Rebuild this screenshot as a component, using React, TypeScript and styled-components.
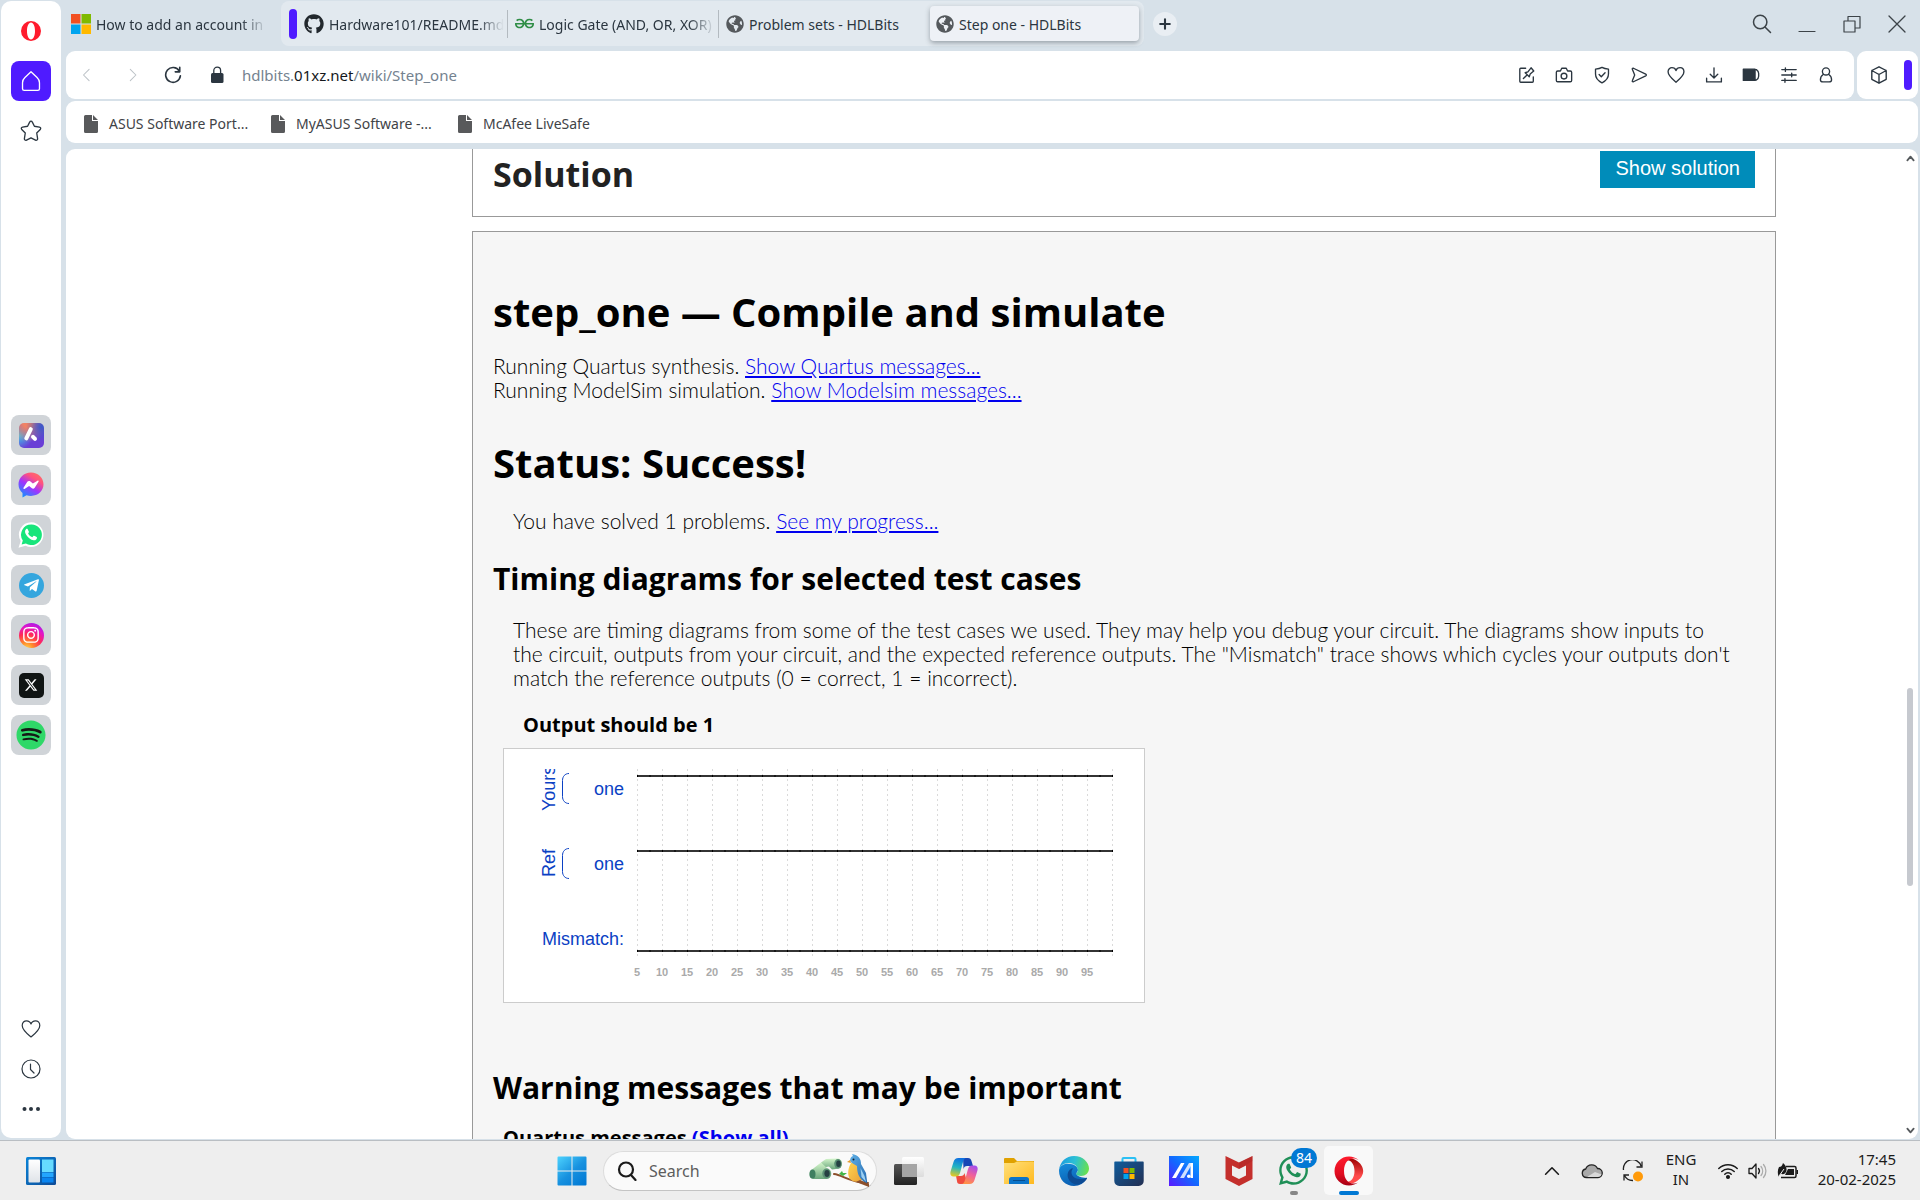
import React from "react";
import styled, { createGlobalStyle } from "styled-components";
import { FaGithub, FaWhatsapp, FaTelegramPlane, FaInstagram, FaSpotify, FaGlobeAmericas } from "react-icons/fa";
import { FaXTwitter } from "react-icons/fa6";
import { SiGeeksforgeeks } from "react-icons/si";

const ui = '"Noto Sans", "Open Sans", sans-serif';
const heading = '"Open Sans", "Noto Sans", sans-serif';
const body = 'Lato, "Open Sans", sans-serif';
const arial = '"Liberation Sans", Arial, sans-serif';
const frame = "#d7e1e9";
const violet = "#4f1bff";
const ink = "#2b3640";

const GlobalStyle = createGlobalStyle`
  * { box-sizing: border-box; }
  body { margin: 0; overflow: hidden; background: ${frame}; font-family: ${ui}; }
  button { border: 0; padding: 0; background: none; font: inherit; color: inherit; cursor: pointer; }
  h1, h2, h3, h4, p, figure { margin: 0; }
  svg { display: block; flex: none; }
`;

const Desktop = styled.div`
  display: grid;
  grid-template-rows: minmax(0, 1fr) 60px;
  height: 100vh;
`;
const Browser = styled.div`
  display: flex;
  gap: 5px;
  min-height: 0;
  padding-left: 1px;
`;
const Sidebar = styled.nav`
  display: flex;
  flex-direction: column;
  align-items: center;
  flex: none;
  width: 60px;
  margin: 1px 0 2px;
  padding: 10px 0 9px;
  background: #fff;
  border-radius: 10px;
  color: ${ink};
`;
const SideButton = styled.button<{ $active?: boolean }>`
  display: grid;
  place-items: center;
  width: 40px;
  height: 40px;
  border-radius: 8px;
  background: ${(p) => (p.$active ? violet : "transparent")};
`;
const SideGroup = styled.div<{ $gap: number }>`
  display: flex;
  flex-direction: column;
  gap: ${(p) => p.$gap}px;
`;
const TopGroup = styled(SideGroup)`
  margin-top: 10px;
`;
const AppStack = styled(SideGroup)`
  margin-top: 264px;
  margin-bottom: auto;
`;
const AppTile = styled.button`
  display: grid;
  place-items: center;
  width: 40px;
  height: 40px;
  border-radius: 8px;
  background: #d0d4d8;
`;
const Glyph = styled.span<{ $bg: string; $round?: boolean; $size?: number }>`
  display: grid;
  place-items: center;
  width: ${(p) => p.$size ?? 25}px;
  height: ${(p) => p.$size ?? 25}px;
  border-radius: ${(p) => (p.$round ? "50%" : "5px")};
  background: ${(p) => p.$bg};
  color: #fff;
`;
const Main = styled.div`
  display: flex;
  flex-direction: column;
  flex: 1;
  min-width: 0;
`;
const TabStrip = styled.div`
  display: flex;
  align-items: flex-start;
  height: 51px;
  padding: 1px 1px 0 0;
  color: ${ink};
  font-size: 14px;
`;
const Tab = styled.button<{ $divider?: boolean }>`
  display: flex;
  align-items: center;
  gap: 5px;
  width: 211px;
  height: 28px;
  padding: 0 3px 0 7px;
  text-align: left;
  border-right: 1px solid ${(p) => (p.$divider ? "#b3bac0" : "transparent")};
`;
const LooseTab = styled(Tab)`
  width: 215px;
  height: 45px;
  padding: 0 13px 0 5px;
`;
const ActiveTab = styled(Tab)`
  width: 209px;
  height: 35px;
  padding-left: 6px;
  background: #eef1f6;
  border-radius: 4px;
  box-shadow: 0 2px 5px rgba(60, 70, 80, 0.45);
`;
const TabTitle = styled.span<{ $fade?: boolean }>`
  flex: 1;
  padding-top: 2px;
  overflow: hidden;
  white-space: nowrap;
  line-height: 24px;
  mask-image: ${(p) => (p.$fade ? "linear-gradient(90deg, #000 85%, transparent)" : "none")};
`;
const TabGroup = styled.div`
  display: flex;
  align-items: center;
  height: 45px;
  padding: 0 5px 0 8px;
  border-radius: 8px;
  background: #e2e9ef;
`;
const Marker = styled.span`
  width: 8px;
  height: 30px;
  border-radius: 4px;
  background: ${violet};
`;
const NewTab = styled.button`
  display: grid;
  place-items: center;
  width: 24px;
  height: 24px;
  margin: 11px 0 0 9px;
  border-radius: 50%;
  background: #e9eef3;
`;
const WindowButtons = styled.div`
  display: flex;
  margin-left: auto;
`;
const WindowButton = styled.button`
  display: grid;
  place-items: center;
  width: 45px;
  height: 46px;
  color: #3c4348;
`;
const Bars = styled.div`
  display: flex;
  gap: 3px;
  margin-right: 2px;
`;
const Panel = styled.div`
  display: flex;
  align-items: center;
  background: #fff;
  border-radius: 9px;
`;
const AddressBar = styled(Panel)`
  flex: 1;
  height: 48px;
  padding: 0 9px 0 0;
`;
const NavButtons = styled.div`
  display: grid;
  grid-template-columns: 42px 46px 38px 50px;
`;
const NavButton = styled.button<{ $dim?: boolean }>`
  display: grid;
  place-items: center;
  height: 40px;
  color: ${(p) => (p.$dim ? "#bcc2c7" : ink)};
`;
const Address = styled.div`
  flex: 1;
  color: #74828f;
  font-size: 15px;
  line-height: 24px;
`;
const Domain = styled.span`
  color: #14181c;
`;
const Tools = styled.div`
  display: grid;
  grid-template-columns: repeat(9, 1fr);
  width: 337px;
`;
const ToolButton = styled.button`
  display: grid;
  place-items: center;
  height: 40px;
  color: ${ink};
`;
const SidePanel = styled(Panel)`
  width: 61px;
  gap: 15px;
  padding-left: 12px;
`;
const Bookmarks = styled(Panel)`
  height: 42px;
  margin: 2px 2px 0 0;
  padding: 3px 0 0 18px;
  font-size: 14px;
`;
const Bookmark = styled.a`
  display: flex;
  align-items: center;
  gap: 11px;
  min-width: 165px;
  margin-right: 22px;
  color: #3f4347;
  text-decoration: none;
  line-height: 24px;
`;
const Viewport = styled.main`
  display: grid;
  grid-template-columns: 406px minmax(0, 1fr) 126px 16px;
  flex: 1;
  min-height: 0;
  margin: 6px 2px 1px 0;
  overflow: hidden;
  background: #fff;
  border-radius: 9px;
`;
const Article = styled.div`
  grid-column: 2;
  display: flex;
  flex-direction: column;
  gap: 14px;
  min-height: 0;
`;
const SolutionBox = styled.section`
  display: flex;
  justify-content: space-between;
  align-items: flex-start;
  flex: none;
  padding: 2px 20px 19px;
  border: 1px solid #999;
  border-top: 0;
`;
const SolutionTitle = styled.h2`
  color: #222;
  font: 700 34px/46px ${heading};
`;
const ShowSolution = styled.button`
  padding: 0 15px 4px;
  height: 37px;
  background: #008cba;
  color: #fff;
  font: 400 20px/32px ${arial};
`;
const Results = styled.section`
  flex: 1 0 auto;
  padding: 56px 20px 0;
  border: 1px solid #999;
  border-bottom: 0;
  background: #f6f6f6;
  color: #000;
  font: 300 21px/24px ${body};
`;
const Title = styled.h1<{ $top?: number }>`
  margin-top: ${(p) => p.$top ?? 0}px;
  font: 700 40px/48px ${heading};
`;
const Subtitle = styled.h2<{ $top: number }>`
  margin-top: ${(p) => p.$top}px;
  font: 700 30px/36px ${heading};
`;
const Caption = styled.h4<{ $top: number; $indent: number }>`
  margin: ${(p) => p.$top}px 0 0 ${(p) => p.$indent}px;
  font: 700 20px/24px ${heading};
`;
const Text = styled.p<{ $top: number; $indent?: boolean }>`
  margin: ${(p) => p.$top}px 0 0 ${(p) => (p.$indent ? 20 : 0)}px;
`;
const Link = styled.a`
  color: #00e;
`;
const ShowAll = styled(Link)`
  text-decoration: none;
`;
const Chart = styled.figure`
  width: 642px;
  margin: 11px 0 0 10px;
  border: 1px solid #ccc;
  background: #fff;
`;
const ScrollTrack = styled.div`
  grid-column: 4;
  display: flex;
  flex-direction: column;
  align-items: center;
  padding: 5px 0 4px;
  color: #55595c;
`;
const ScrollThumb = styled.div`
  width: 6px;
  height: 198px;
  margin: 525px 0 auto;
  border-radius: 3px;
  background: #c6c9cf;
`;

const Taskbar = styled.footer`
  display: grid;
  grid-template-columns: 1fr auto 1fr;
  align-items: center;
  border-top: 1px solid #b9bec3;
  background: #eee;
  color: #1b1b1b;
`;
const Widgets = styled.button`
  margin-left: 26px;
  justify-self: start;
`;
const Pinned = styled.div`
  display: flex;
  align-items: center;
`;
const Search = styled.label`
  display: flex;
  align-items: center;
  width: 274px;
  height: 40px;
  margin: 0 4px;
  padding: 0 5px 0 13px;
  border: 1px solid #dcdcdc;
  border-bottom-color: #c4c4c4;
  border-radius: 20px;
  background: #fafafa;
`;
const SearchInput = styled.input`
  flex: 1;
  min-width: 0;
  padding: 0 0 0 12px;
  border: 0;
  outline: 0;
  background: none;
  font: 400 16px/24px ${ui};
  &::placeholder { color: #5d5d5d; opacity: 1; }
`;
const TaskButton = styled.button<{ $active?: boolean }>`
  position: relative;
  display: grid;
  place-items: center;
  width: 49px;
  height: 49px;
  margin: 0 3px;
  border-radius: 5px;
  background: ${(p) => (p.$active ? "#f9f9f9" : "none")};
`;
const Running = styled.span<{ $active?: boolean }>`
  position: absolute;
  bottom: 0;
  left: 50%;
  width: ${(p) => (p.$active ? 20 : 8)}px;
  height: 4px;
  border-radius: 2px;
  background: ${(p) => (p.$active ? "#0078d4" : "#868686")};
  transform: translateX(-50%);
`;
const Badge = styled.span`
  position: absolute;
  top: 2px;
  left: 22px;
  width: 26px;
  border-radius: 10px;
  background: #0078d4;
  color: #fff;
  font-size: 14px;
  line-height: 20px;
`;
const Tray = styled.div`
  display: flex;
  align-items: center;
  justify-content: flex-end;
  padding-right: 24px;
  font-size: 15px;
  line-height: 20px;
`;
const TrayButton = styled.button<{ $w: number }>`
  display: grid;
  place-items: center;
  width: ${(p) => p.$w}px;
  height: 44px;
`;
const StatusIcons = styled.div`
  display: flex;
  margin-left: 5px;
`;
const Clock = styled.button`
  min-width: 93px;
  padding-bottom: 3px;
  text-align: right;
`;
const Language = styled.span`
  padding-bottom: 3px;
`;

type LineProps = { size?: number; width?: number; color?: string; children: React.ReactNode };
const Line = ({ size = 20, width = 1.5, color = "currentColor", children }: LineProps) => (
  <svg width={size} height={size} viewBox="0 0 20 20" fill="none" stroke={color} strokeWidth={width} strokeLinecap="round" strokeLinejoin="round" aria-hidden="true">
    {children}
  </svg>
);

const HeartPath = () => <path d="M10 18C7 15.500 1.200 11 1.200 6.500 1.200 3.500 3.300 1.800 5.500 1.800 7.500 1.800 9.300 3 10 5c.7-2 2.500-3.200 4.500-3.200 2.200 0 4.300 1.700 4.300 4.700C18.800 11 13 15.500 10 18Z" />;

const WindowsLogo = () => (
  <svg width="20" height="20" viewBox="0 0 20 20" aria-hidden="true">
    <path fill="#f25022" d="M0 0h9.500v9.500H0z" /><path fill="#7fba00" d="M10.500 0H20v9.500h-9.500z" />
    <path fill="#00a4ef" d="M0 10.500h9.500V20H0z" /><path fill="#ffb900" d="M10.500 10.500H20V20h-9.500z" />
  </svg>
);

const OperaFlat = () => (
  <svg width="20" height="20" viewBox="0 0 20 20" aria-hidden="true">
    <path fill="#ff1b2d" fillRule="evenodd" d="M10 0a10 10 0 1 0 0 20 10 10 0 0 0 0-20Zm0 1.600c2.400 0 4 3.600 4 8.400s-1.600 8.400-4 8.400S6 14.800 6 10s1.600-8.400 4-8.400Z" />
  </svg>
);

const OperaLogo = () => (
  <svg width="30" height="30" viewBox="0 0 30 30" aria-hidden="true">
    <defs>
      <linearGradient id="opA" x1="0" y1="0" x2="0" y2="1"><stop offset="0" stopColor="#ff1b2d" /><stop offset=".6" stopColor="#e00c20" /><stop offset="1" stopColor="#a70014" /></linearGradient>
      <linearGradient id="opB" x1="0" y1="0" x2="0" y2="1"><stop offset="0" stopColor="#9c0000" /><stop offset=".7" stopColor="#ff4b4b" /></linearGradient>
    </defs>
    <path fill="url(#opB)" d="M10 5c2.500-3 6.500-3.500 10-1.800C24 5.100 29.200 9 29.200 15S24 25 20 26.800c-3.500 1.700-7.500 1.200-10-1.800 6 3 10.500-2.500 10.500-10S16 2 10 5Z" />
    <path fill="url(#opA)" d="M15 .5a14.500 14.500 0 1 0 0 29c3.600 0 7-1.300 9.600-3.500-5.700 3.800-14.600 1-14.600-11S18.900.200 24.600 4A14.500 14.500 0 0 0 15 .5Z" />
  </svg>
);

const Messenger = () => (
  <svg width="26" height="26" viewBox="0 0 26 26" aria-hidden="true">
    <defs><linearGradient id="msg" x1=".15" y1="1" x2=".8" y2="0"><stop offset="0" stopColor="#0a99ff" /><stop offset=".45" stopColor="#a034ff" /><stop offset=".75" stopColor="#ff5280" /><stop offset="1" stopColor="#ff7061" /></linearGradient></defs>
    <path fill="url(#msg)" d="M13 .5C5.800.5.500 5.700.5 12.300c0 3.700 1.600 6.700 4 8.800V25.500l4-2.200c1.400.4 2.900.6 4.500.6 7.200 0 12.500-5 12.500-11.600S20.200.5 13 .5Z" />
    <path fill="#fff" d="m5.500 15.800 3.800-6c.7-1 1.900-1.200 2.800-.5l2.800 2.200 4.600-2.800c.8-.4 1.500.4 1 1.100l-3.800 6c-.7 1-1.900 1.200-2.800.5l-2.800-2.200-4.600 2.800c-.8.400-1.500-.4-1-1.100Z" />
  </svg>
);

const WhatsAppBubble = () => (
  <svg width="26" height="26" viewBox="0 0 26 26" aria-hidden="true">
    <path fill="#fff" d="M13.300.300A12.300 12.300 0 0 0 2.700 18.900L.5 25.700l7-1.900A12.400 12.400 0 1 0 13.300.3Z" />
    <path fill="#18e57b" d="M13.300 2.500a10.200 10.200 0 0 0-8.500 15.900l-1.200 4.200 4.300-1.200A10.300 10.300 0 1 0 13.300 2.500Z" />
    <path fill="#fff" d="M9.700 7.300c-.3-.6-1.200-.6-1.700 0C6.400 9 7 11 8.300 13c2 3 4.400 4.700 7.300 5.300 1.800.3 3.400-.9 3.400-2.800 0-.8-2.900-2.200-3.400-1.800l-1.300 1.500c-2-.8-3.300-2.200-4.200-3.800L11 10Z" />
  </svg>
);

const AriaLogo = () => (
  <Glyph $bg="radial-gradient(circle at 90% 15%, #3c59c9, transparent 50%), radial-gradient(circle at 35% 0, #f08265 15%, transparent 65%), radial-gradient(circle at 0 50%, #3fc7ea, transparent 50%), #6a3ed6">
    <svg width="18" height="18" viewBox="0 0 18 18" fill="none" stroke="#fff" strokeLinecap="round" aria-hidden="true">
      <path strokeWidth="4" d="M8.800 3.200 4.300 12.300" /><path strokeWidth="4" d="m11 10.800 2 2" />
    </svg>
  </Glyph>
);

const Instagram = () => (
  <Glyph $round $bg="radial-gradient(circle at 30% 105%, #fd5 0, #ff8a2b 22%, #ff2a55 48%, #e415c8 70%, #7a1fff 100%)"><FaInstagram size={18} /></Glyph>
);

const StartLogo = () => (
  <svg width="30" height="30" viewBox="0 0 30 30" aria-hidden="true">
    <defs><linearGradient id="win" gradientUnits="userSpaceOnUse" x1="0" y1="0" x2="26" y2="30"><stop offset="0" stopColor="#4fd5ff" /><stop offset=".55" stopColor="#1791df" /><stop offset="1" stopColor="#0078d4" /></linearGradient></defs>
    <path fill="url(#win)" d="M1.500.5h13v14H.5v-13a1 1 0 0 1 1-1ZM15.500.5h13a1 1 0 0 1 1 1v13h-14ZM.5 15.500h14v14h-13a1 1 0 0 1-1-1ZM15.500 15.500h14v13a1 1 0 0 1-1 1h-13Z" />
  </svg>
);

const WidgetsLogo = () => (
  <svg width="30" height="28" viewBox="0 0 30 28" aria-hidden="true">
    <defs><linearGradient id="wd" x1="0" y1="0" x2="1" y2="1"><stop offset="0" stopColor="#0a84d8" /><stop offset="1" stopColor="#0f4b96" /></linearGradient><linearGradient id="wp" x1="0" y1="0" x2="0" y2="1"><stop offset="0" stopColor="#fff" /><stop offset="1" stopColor="#dfe3e8" /></linearGradient></defs>
    <rect width="30" height="28" rx="1.500" fill="url(#wd)" />
    <rect x="2.500" y="2.500" width="11.500" height="23" rx="1" fill="url(#wp)" />
    <path fill="#66dbff" d="M16 2.500h11.500V15H16z" /><path fill="#23a6ff" d="M16 15.500h11.500V20H16z" /><path fill="#0a85f0" d="M16 20.500h11.500v5H16z" />
  </svg>
);

const SearchArt = () => (
  <svg width="62" height="34" viewBox="0 0 62 34" aria-hidden="true">
    <defs>
      <linearGradient id="bino" x1="0" y1="0" x2="0" y2="1"><stop offset="0" stopColor="#d3f5ca" /><stop offset="1" stopColor="#6aa67c" /></linearGradient>
      <linearGradient id="birdBody" x1="0" y1="0" x2="1" y2="1"><stop offset="0" stopColor="#ffd54d" /><stop offset="1" stopColor="#e9a13a" /></linearGradient>
      <linearGradient id="wing" x1="0" y1="0" x2="1" y2="1"><stop offset="0" stopColor="#5fb0e6" /><stop offset="1" stopColor="#2468ae" /></linearGradient>
    </defs>
    <path fill="url(#bino)" d="M12 8.500 17 5l11-.5c3 0 5 2 5 5s-1.500 5-4 5.200l-6 .8-3-3-6 1Z" />
    <path fill="url(#bino)" d="M3 15.500 12 8.500l6 5.500c3 1 4.500 3 4.300 6-.2 3-2 5-5 5H4.500c-2.500 0-4-2-4-4.700 0-2 .8-3.800 2.500-4.800Z" />
    <ellipse cx="3.500" cy="20" rx="3" ry="4.500" fill="#3f7f60" />
    <ellipse cx="17.500" cy="19.500" rx="4.200" ry="5" fill="#5a8f74" /><ellipse cx="18" cy="19.500" rx="2.600" ry="3.400" fill="#253f42" />
    <ellipse cx="29" cy="9.800" rx="3.800" ry="4.800" fill="#5a8f74" /><ellipse cx="29.500" cy="9.800" rx="2.300" ry="3.200" fill="#253f42" />
    <path d="M25 20c9 1 14 8 34 9" fill="none" stroke="#8b4f2c" strokeWidth="2" strokeLinecap="round" />
    <path fill="#44b649" d="m30 20 3-3 1 2 4 0-4 3Z" />
    <path fill="url(#birdBody)" d="M42 9c-3 5-4 12-1 16 4 4 9 3 12 1L50 8Z" />
    <path fill="url(#wing)" d="M41 7c0-3 1.500-4.500 3-5l-1-2c3 .5 5.500 1.500 7 3.500 1.500 2 2 4 2 6.500l5 9 1.500 12-5.500-5c-4-4-5-9-5-14-2-1.500-5-2-7-5Z" />
    <path fill="#9cd0f2" d="m51.500 14 4 8 1.500 6-4.500-5Z" /><path fill="#e39b2d" d="m41 6-3 2 4 1Z" /><circle cx="44.500" cy="5.500" r="1" fill="#16212b" />
    <path fill="#8b4f2c" d="m47 28 13 5 0-3-9-4Z" />
  </svg>
);

const TaskView = () => (
  <svg width="30" height="30" viewBox="0 0 30 30" aria-hidden="true">
    <defs><linearGradient id="tv" x1="0" y1="0" x2="0" y2="1"><stop offset="0" stopColor="#555" /><stop offset="1" stopColor="#222" /></linearGradient><linearGradient id="tw" x1="0" y1="0" x2="0" y2="1"><stop offset="0" stopColor="#fff" /><stop offset="1" stopColor="#dcdcdc" /></linearGradient></defs>
    <rect y="8" width="23" height="21" rx="1.500" fill="url(#tv)" /><rect x="8" y="1" width="22" height="20" rx="1.500" fill="url(#tw)" /><path fill="#a5a5a5" d="M8 8h15v13H9a1 1 0 0 1-1-1Z" />
  </svg>
);

const Copilot = () => (
  <svg width="28" height="28" viewBox="0 0 28 28" aria-hidden="true">
    <defs>
      <linearGradient id="c1" x1=".5" y1="0" x2=".3" y2="1"><stop offset="0" stopColor="#0f6fe0" /><stop offset=".5" stopColor="#21b5c2" /><stop offset="1" stopColor="#e8c81e" /></linearGradient>
      <linearGradient id="c2" x1=".8" y1="0" x2=".4" y2="1"><stop offset="0" stopColor="#a04df0" /><stop offset=".5" stopColor="#f0609c" /><stop offset="1" stopColor="#ff9147" /></linearGradient>
    </defs>
    <path fill="#1747b5" d="M13 1h5c2 0 3 1 3.500 3l1.500 5h-6c-2 0-3 1-3.500 3Z" />
    <path fill="#ef4b3f" d="M15 27h-5c-2 0-3-1-3-3l-1-5h5c2 0 3-1 3.500-3l2 7Z" />
    <path fill="url(#c1)" d="M8.500 1h8c-2 0-3 2-3.500 4l-3 11c-.7 2.500-2 3.500-4 3.500H3.500C.5 19.500-.2 17 .7 14L3.500 5c.8-2.500 2.200-4 5-4Z" />
    <path fill="url(#c2)" d="M19.500 27h-8c2 0 3-2 3.500-4l3-11c.7-2.500 2-3.500 4-3.500h2.500c3 0 3.700 2.500 2.800 5.500L24.500 23c-.8 2.500-2.200 4-5 4Z" />
  </svg>
);

const Folder = () => (
  <svg width="30" height="30" viewBox="0 0 30 30" aria-hidden="true">
    <defs><linearGradient id="fo" x1="0" y1="0" x2="1" y2="1"><stop offset="0" stopColor="#ffe07a" /><stop offset="1" stopColor="#ffb91f" /></linearGradient></defs>
    <path fill="#e0a100" d="M1 2h9l3 3h17v4H0V3a1 1 0 0 1 1-1Z" /><path fill="url(#fo)" d="M0 7h10l3-1.500h16a1 1 0 0 1 1 1V28H0Z" />
    <path fill="#0b74c9" d="M7.500 21h15a2.500 2.500 0 0 1 2.500 2.500V28H5v-4.500A2.500 2.500 0 0 1 7.500 21Z" /><path stroke="#064c8c" d="M9 24.500h12" />
  </svg>
);

const Edge = () => (
  <svg width="30" height="30" viewBox="0 0 30 30" aria-hidden="true">
    <defs>
      <linearGradient id="e1" x1="0" y1=".3" x2="1" y2=".5"><stop offset="0" stopColor="#1a9be0" /><stop offset=".5" stopColor="#2cc0d4" /><stop offset="1" stopColor="#68e04f" /></linearGradient>
      <linearGradient id="e2" x1=".3" y1="0" x2=".6" y2="1"><stop offset="0" stopColor="#1489d8" /><stop offset="1" stopColor="#0a5cb0" /></linearGradient>
    </defs>
    <path fill="url(#e2)" d="M.1 13.500C1 9.500 5 7.700 9 7.700c6 0 10 3 10 6.300 0 1.800-1.500 2-1.500 3.500 0 2 3.500 4 8 4.200L28 22c-2.600 5-7.500 8-13 8C6 30-.7 22.500.1 13.500Z" />
    <path fill="#0d4b94" d="M12.500 12.500c-6 3-5 12.500 2.500 15.500 5.500 1.800 10.500-1.500 12.800-5.300.4-.7-.2-1.100-.8-.8-5 2.600-14.500 1-14.500-5.400 0-1.500.5-3 1.800-4Z" />
    <path fill="url(#e1)" d="M.1 13.500C1 5.800 7.200 0 15 0c9 0 15 6.500 15 12.500 0 4.500-3.500 7.500-8 7.500-3 0-4.800-1-4.800-2 0-.8 1.600-1.500 1.600-4 0-3.700-4-7-9.300-7C5 7 1.300 9.800.1 13.500Z" />
  </svg>
);

const Store = () => (
  <svg width="30" height="30" viewBox="0 0 30 30" aria-hidden="true">
    <defs><linearGradient id="st" x1="0" y1="0" x2="1" y2="1"><stop offset="0" stopColor="#0f5c9c" /><stop offset="1" stopColor="#242f52" /></linearGradient></defs>
    <path fill="none" stroke="#2bc0f4" strokeWidth="2" d="M8.500 7V3a1 1 0 0 1 1-1h11a1 1 0 0 1 1 1v4" />
    <path fill="url(#st)" d="M1 5.500h28a.7.7 0 0 1 .7.7V25a5 5 0 0 1-5 5H5.300a5 5 0 0 1-5-5V6.200A.7.7 0 0 1 1 5.500Z" />
    <path fill="#f25022" d="M9.500 12h5v5h-5z" /><path fill="#7fba00" d="M15.500 12h5v5h-5z" /><path fill="#00a4ef" d="M9.500 18h5v5h-5z" /><path fill="#ffb900" d="M15.500 18h5v5h-5z" />
  </svg>
);

const MyAsus = () => (
  <svg width="30" height="30" viewBox="0 0 30 30" aria-hidden="true">
    <defs><linearGradient id="ma" x1="0" y1="1" x2="1" y2="0"><stop offset="0" stopColor="#5a17ff" /><stop offset=".5" stopColor="#1368ff" /><stop offset="1" stopColor="#05a9ff" /></linearGradient></defs>
    <path fill="url(#ma)" d="M0 0h30v30H0z" />
    <path fill="#fff" d="M12 7h3.500L7 22H3Z" /><path fill="#cfe0ff" d="M20 7h3.500L15 22h-4Z" /><path fill="#fff" d="M21.500 7H24v15h-2.500Z" /><circle cx="19.800" cy="20.300" r="1.800" fill="#fff" />
  </svg>
);

const McAfee = () => (
  <svg width="30" height="30" viewBox="0 0 30 30" aria-hidden="true">
    <path fill="#c42f2c" fillRule="evenodd" d="M1.500 0 15 6.500 28.500 0v23L15 30 1.500 23ZM8 9.500V19.500l7 3.500 7-3.500V9.500L15 13Z" />
    <path fill="#a52625" d="M15 6.500 28.500 0v5L15 13Z" opacity=".35" />
  </svg>
);

const Globe = () => <FaGlobeAmericas size={18} color="#55595d" />;

const DocIcon = () => (
  <svg width="14" height="18" viewBox="0 0 14 18" aria-hidden="true"><path fill="#58595b" d="M1.500 0H8v6h6v10.500a1.500 1.500 0 0 1-1.500 1.500h-11A1.500 1.500 0 0 1 0 16.500v-15A1.500 1.500 0 0 1 1.500 0ZM9 0l5 5H9Z" /></svg>
);

const ticks = Array.from({ length: 20 }, (_, i) => i);
const traces = [27, 102, 202];

const TimingDiagram = () => (
  <svg width="640" height="253" viewBox="0 0 640 253" fontFamily={arial} role="img" aria-label="Timing diagram">
    <g stroke="#b4b4b4" strokeDasharray="1 4">
      {ticks.map((i) => <path key={i} d={`M${133.5 + i * 25} 20.500V208`} />)}
    </g>
    {traces.map((y) => (
      <g key={y} fill="none" stroke="#333" strokeWidth="2">
        <path d={`M133 ${y}H609`} />
        <path stroke="#000" strokeDasharray="1 11.500" d={`M133 ${y}H609`} />
      </g>
    ))}
    <g fill="#0b41c4" fontSize="18">
      <clipPath id="labelClip"><path d="M30 20h100v190H30z" /></clipPath>
      <g clipPath="url(#labelClip)">
        <text transform="translate(51 62) rotate(-90)">Yours</text>
      </g>
      <text transform="translate(51 128) rotate(-90)">Ref</text>
      <text x="120" y="46" textAnchor="end">one</text>
      <text x="120" y="121" textAnchor="end">one</text>
      <text x="120" y="196" textAnchor="end">Mismatch:</text>
    </g>
    <g fill="none" stroke="#0b41c4">
      <path d="M65 24.500c-4 0-6.500 3-6.500 7v16c0 4 2.500 7 6.500 7" /><path d="M65 99.500c-4 0-6.500 3-6.500 7v16c0 4 2.500 7 6.500 7" />
    </g>
    <g fill="#aaa" fontSize="11" fontWeight="700" textAnchor="middle">
      {ticks.slice(0, 19).map((i) => <text key={i} x={133 + i * 25} y="227">{(i + 1) * 5}</text>)}
    </g>
  </svg>
);

const tools: [string, React.ReactNode][] = [
  ["Edit page", <><path d="M8.500 2.500H3a1 1 0 0 0-1 1V17a1 1 0 0 0 1 1h13a1 1 0 0 0 1-1v-5" /><path d="m6 14 4-4M8 7.500l4.500 4.500 1-3 4-3.500L14.500 2 11 6.500Z" /></>],
  ["Snapshot", <><path d="M3 5.500h3l1.500-3h5l1.500 3h3a1.500 1.500 0 0 1 1.500 1.500v9a1.500 1.500 0 0 1-1.500 1.500H3A1.500 1.500 0 0 1 1.500 16V7A1.500 1.500 0 0 1 3 5.500Z" /><circle cx="10" cy="11.200" r="3.200" /></>],
  ["Blocker", <><path d="M10 1.500c2.500 1.500 5 1.800 7.200 2v5.500c0 4.500-3 7.700-7.200 9.700-4.200-2-7.200-5.200-7.200-9.700V3.500c2.200-.2 4.700-.5 7.200-2Z" /><path d="m6.800 9.500 2.400 2.500 4.200-4.500" /></>],
  ["My Flow", <path d="M3.800 2.500 17.500 9c.9.500.9 1.500 0 2L3.800 17.500c-1 .4-1.600-.3-1.200-1.200L5.200 10 2.600 3.700c-.4-.9.200-1.600 1.200-1.200Z" />],
  ["Favourites", <HeartPath />],
  ["Downloads", <><path d="M10 2v11M5.800 9.200 10 13.300l4.200-4.100M1.800 13.500v4.200h16.400v-4.200" /></>],
  ["Battery saver", <><path fill="currentColor" d="M1.500 3.500h13v12.500h-13Z" /><path d="M14.500 4h1.500c1.500 1 2.500 2.500 2.500 4v3.500c0 1.500-1 3-2.500 4h-1.500" /></>],
  ["Easy setup", <path d="M2 4h16M2 10h16M2 16h16M6 2v4M13 8v4M5.500 14v4" />],
  ["Profile", <><circle cx="10" cy="6" r="4" /><path d="M7.200 9.200C4.800 10.800 3.800 13 3.800 15.200c0 1.800 1.200 2.500 3 2.500h6.400c1.800 0 3-.7 3-2.500 0-2.200-1-4.400-3.400-6" /></>],
];

const sideApps: [string, React.ReactNode][] = [
  ["Aria", <AriaLogo />],
  ["Messenger", <Messenger />],
  ["WhatsApp", <WhatsAppBubble />],
  ["Telegram", <Glyph $round $bg="#35a6de"><FaTelegramPlane size={17} /></Glyph>],
  ["Instagram", <Instagram />],
  ["X", <Glyph $bg="#101413"><FaXTwitter size={14} /></Glyph>],
  ["Spotify", <Glyph $round $size={30} $bg="radial-gradient(#151a17 60%, transparent 62%)"><FaSpotify size={30} color="#2fd868" /></Glyph>],
];

export default function App() {
  return (
    <Desktop>
      <GlobalStyle />
      <Browser>
        <Sidebar aria-label="Browser sidebar">
          <SideButton aria-label="Opera menu"><OperaFlat /></SideButton>
          <TopGroup $gap={10}>
            <SideButton $active aria-label="Home"><Line size={22} width={1.2} color="#fff"><path d="m10 1.500 5.500 5.300c1.500 1.400 2.200 2.800 2.200 4.700v5.500c0 1-.7 1.500-1.500 1.500H3.800c-.8 0-1.500-.5-1.500-1.500v-5.500c0-1.900.7-3.300 2.200-4.700Z" /></Line></SideButton>
            <SideButton aria-label="Bookmarks"><Line size={22} width={1.2}><path d="M8.900 1.700c.4-.9 1.800-.9 2.200 0l2 4 4.600.7c1.100.2 1.500 1.400.7 2.200l-3.200 3.200.8 5.200c.1 1-.9 1.800-1.900 1.300L10 16.200l-4.100 2.100c-1 .5-2-.3-1.900-1.300l.8-5.200L1.600 8.600c-.8-.8-.4-2 .7-2.200l4.600-.7Z" /></Line></SideButton>
          </TopGroup>
          <AppStack $gap={10}>
            {sideApps.map(([name, icon]) => <AppTile key={name} aria-label={name}>{icon}</AppTile>)}
          </AppStack>
          <SideGroup $gap={0}>
            <SideButton aria-label="Favourites"><Line width={1.200}><HeartPath /></Line></SideButton>
            <SideButton aria-label="History"><Line width={1.200}><circle cx="10" cy="10" r="9" /><path d="M9.500 5v5.500l3.500 3.500" /></Line></SideButton>
            <SideButton aria-label="More"><svg width="20" height="6" viewBox="0 0 20 6" fill={ink}><circle cx="3.500" cy="3" r="2" /><circle cx="10" cy="3" r="2" /><circle cx="17" cy="3" r="2" /></svg></SideButton>
          </SideGroup>
        </Sidebar>
        <Main>
          <TabStrip>
            <LooseTab><WindowsLogo /><TabTitle $fade>How to add an account in</TabTitle></LooseTab>
            <TabGroup>
              <Marker />
              <Tab $divider><FaGithub size={20} color="#22282d" /><TabTitle $fade>Hardware101/README.md</TabTitle></Tab>
              <Tab $divider><SiGeeksforgeeks size={19} color="#2f8d46" /><TabTitle $fade>Logic Gate (AND, OR, XOR)</TabTitle></Tab>
              <Tab><Globe /><TabTitle>Problem sets - HDLBits</TabTitle></Tab>
              <ActiveTab aria-current="page"><Globe /><TabTitle>Step one - HDLBits</TabTitle></ActiveTab>
            </TabGroup>
            <NewTab aria-label="New tab"><Line size={12} width={3.500}><path d="M10 2v16M2 10h16" /></Line></NewTab>
            <WindowButtons>
              <WindowButton aria-label="Search tabs"><Line><circle cx="8.200" cy="8" r="6.700" /><path d="m13 13 5.500 5.500" /></Line></WindowButton>
              <WindowButton aria-label="Minimise"><Line width={1.200}><path d="M2 17.500h16" /></Line></WindowButton>
              <WindowButton aria-label="Restore"><Line width={1.200}><path d="M2 7h11v11H2ZM6 7V2.500h12V14h-5" /></Line></WindowButton>
              <WindowButton aria-label="Close"><Line width={1.300}><path d="m2 2 16 16M18 2 2 18" /></Line></WindowButton>
            </WindowButtons>
          </TabStrip>
          <Bars>
            <AddressBar>
              <NavButtons>
                <NavButton $dim aria-label="Back"><Line size={14}><path d="m13 2-8 8 8 8" /></Line></NavButton>
                <NavButton $dim aria-label="Forward"><Line size={14}><path d="m9 2 8 8-8 8" /></Line></NavButton>
                <NavButton aria-label="Reload"><Line size={18} width={1.800}><path d="M17 5.500A8.200 8.200 0 1 0 18.200 11M17.500 1.500v5h-5" /></Line></NavButton>
                <NavButton aria-label="Site information">
                  <svg width="14" height="18" viewBox="0 0 14 18"><rect x="1" y="7" width="12.500" height="10" rx="1.500" fill={ink} /><path d="M3.800 8V4.500a3.400 3.400 0 0 1 6.800 0V8" fill="none" stroke={ink} strokeWidth="1.300" /></svg>
                </NavButton>
              </NavButtons>
              <Address role="textbox" aria-label="Address">hdlbits.<Domain>01xz.net</Domain>/wiki/Step_one</Address>
              <Tools>
                {tools.map(([name, icon]) => <ToolButton key={name} aria-label={name}><Line size={18}>{icon}</Line></ToolButton>)}
              </Tools>
            </AddressBar>
            <SidePanel>
              <ToolButton aria-label="Extensions"><Line width={1.400}><path d="M10 1.800 17.200 5.500v8.800L10 18.200l-7.200-3.900V5.500ZM2.800 5.500 10 9.500l7.200-4M10 9.500v8.700" /></Line></ToolButton>
              <Marker />
            </SidePanel>
          </Bars>
          <Bookmarks>
            <Bookmark href="#asus"><DocIcon />ASUS Software Port...</Bookmark>
            <Bookmark href="#myasus"><DocIcon />MyASUS Software -...</Bookmark>
            <Bookmark href="#mcafee"><DocIcon />McAfee LiveSafe</Bookmark>
          </Bookmarks>
          <Viewport>
            <Article>
              <SolutionBox>
                <SolutionTitle>Solution</SolutionTitle>
                <ShowSolution>Show solution</ShowSolution>
              </SolutionBox>
              <Results>
                <Title>step_one — Compile and simulate</Title>
                <Text $top={18}>
                  Running Quartus synthesis. <Link href="#quartus">Show Quartus messages...</Link><br />
                  Running ModelSim simulation. <Link href="#modelsim">Show Modelsim messages...</Link>
                </Text>
                <Title $top={37}>Status: Success!</Title>
                <Text $top={22} $indent>You have solved 1 problems. <Link href="#progress">See my progress...</Link></Text>
                <Subtitle $top={28}>Timing diagrams for selected test cases</Subtitle>
                <Text $top={21} $indent>
                  These are timing diagrams from some of the test cases we used. They may help you debug your circuit. The diagrams show inputs to<br />
                  the circuit, outputs from your circuit, and the expected reference outputs. The "Mismatch" trace shows which cycles your outputs don't<br />
                  match the reference outputs (0 = correct, 1 = incorrect).
                </Text>
                <Caption $top={23} $indent={30}>Output should be 1</Caption>
                <Chart><TimingDiagram /></Chart>
                <Subtitle $top={67}>Warning messages that may be important</Subtitle>
                <Caption $top={20} $indent={10}>Quartus messages <ShowAll href="#all">(Show all)</ShowAll></Caption>
              </Results>
            </Article>
            <ScrollTrack>
              <Line size={9} width={4}><path d="m3 14 7-8 7 8" /></Line>
              <ScrollThumb />
              <Line size={9} width={4}><path d="m3 6 7 8 7-8" /></Line>
            </ScrollTrack>
          </Viewport>
        </Main>
      </Browser>
      <Taskbar>
        <Widgets aria-label="Widgets"><WidgetsLogo /></Widgets>
        <Pinned>
          <TaskButton aria-label="Start"><StartLogo /></TaskButton>
          <Search>
            <Line size={20} width={2.200}><circle cx="9" cy="8.500" r="7" /><path d="m14 14 4.500 5" /></Line>
            <SearchInput type="search" placeholder="Search" aria-label="Search" />
            <SearchArt />
          </Search>
          <TaskButton aria-label="Task view"><TaskView /></TaskButton>
          <TaskButton aria-label="Copilot"><Copilot /></TaskButton>
          <TaskButton aria-label="File Explorer"><Folder /></TaskButton>
          <TaskButton aria-label="Edge"><Edge /></TaskButton>
          <TaskButton aria-label="Store"><Store /></TaskButton>
          <TaskButton aria-label="MyASUS"><MyAsus /></TaskButton>
          <TaskButton aria-label="McAfee"><McAfee /></TaskButton>
          <TaskButton aria-label="WhatsApp"><FaWhatsapp size={33} color="#1f8f57" /><Badge>84</Badge><Running /></TaskButton>
          <TaskButton $active aria-label="Opera"><OperaLogo /><Running $active /></TaskButton>
        </Pinned>
        <Tray>
          <TrayButton $w={40} aria-label="Hidden icons"><Line size={16} width={2}><path d="m2 14 8-8 8 8" /></Line></TrayButton>
          <TrayButton $w={40} aria-label="OneDrive">
            <svg width="22" height="18" viewBox="0 0 22 18"><path d="M5.500 15.500a4.300 4.300 0 0 1-.8-8.500A6.500 6.500 0 0 1 16.500 6.500a4.500 4.500 0 0 1 .5 9Z" fill="#a9a9a9" stroke="#222" strokeWidth="1.300" /><path d="m6 15 8-5 6.500 2.500a3.800 3.800 0 0 1-3.500 2.400H6Z" fill="#d9d9d9" /></svg>
          </TrayButton>
          <TrayButton $w={42} aria-label="Update available">
            <svg width="22" height="22" viewBox="0 0 22 22" fill="none" stroke="#222" strokeWidth="1.300"><path d="M1.500 10A9 9 0 0 1 19 6M20 1.500V7h-5.500M2 20.500V15h5M2.500 15.500A9 9 0 0 0 11 20.500" /><circle cx="16" cy="16.500" r="5" fill="#ff9a0a" stroke="none" /></svg>
          </TrayButton>
          <TrayButton $w={54} aria-label="Language"><Language>ENG<br />IN</Language></TrayButton>
          <StatusIcons>
            <TrayButton $w={30} aria-label="Wi-Fi"><Line width={1.500}><path d="M.8 7.500a13 13 0 0 1 18.400 0M3.800 10.500a8.800 8.800 0 0 1 12.400 0M6.800 13.200a4.500 4.500 0 0 1 6.400 0" /><circle cx="10" cy="16" r="1.300" fill="currentColor" /></Line></TrayButton>
            <TrayButton $w={30} aria-label="Volume"><Line width={1.300}><path d="M1 7.500h3l4-4.500v14l-4-4.500H1Z" /><path d="M10.500 7.500a4 4 0 0 1 0 5" /><path stroke="#aaa" d="M13 5.500a7 7 0 0 1 0 9M15.500 3.500a10 10 0 0 1 0 13" /></Line></TrayButton>
            <TrayButton $w={30} aria-label="Battery">
              <svg width="22" height="20" viewBox="0 0 22 20"><path d="M9 5.500h8.500A1.500 1.500 0 0 1 19 7v8a1.500 1.500 0 0 1-1.500 1.500H4" fill="none" stroke="#1b1b1b" strokeWidth="1.500" /><path fill="#1b1b1b" d="M11 8h6v6H8ZM19.500 9H21v4h-1.500ZM2 6c2 0 3-1 4-4 2 2 4 4 3.500 7.500C9 13 5.500 14 4 12.500L1.500 15.500C.5 12 .5 9 2 6Z" /><path stroke="#eee" d="m2 15 5-7" /></svg>
            </TrayButton>
          </StatusIcons>
          <Clock>17:45<br />20-02-2025</Clock>
        </Tray>
      </Taskbar>
    </Desktop>
  );
}
